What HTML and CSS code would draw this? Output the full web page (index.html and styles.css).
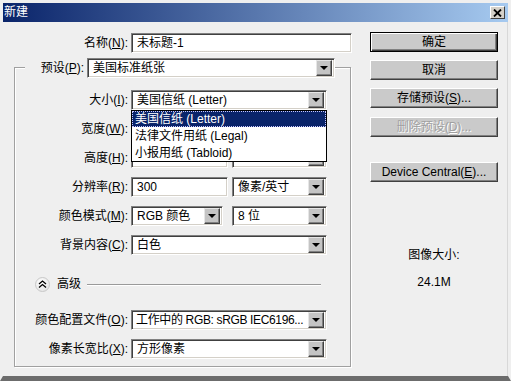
FILE: index.html
```html
<!DOCTYPE html>
<html lang="zh-CN">
<head>
  <meta charset="UTF-8">
  <title>新建</title>
  <link rel="stylesheet" href="styles.css">
</head>
<body>

  <div class="window">
    <div class="titlebar">
      <span class="title">新建</span>
      <span class="close">
        <svg width="9" height="8" viewBox="0 0 9 8"><path d="M1 0.5 L8 7.5 M8 0.5 L1 7.5" stroke="#000" stroke-width="1.8"/></svg>
      </span>
    </div>

    <div class="client">
      <!-- left: fields -->
      <div class="main">
        <div class="row name-row">
          <label class="lbl">名称(<u>N</u>):</label>
          <div class="field w-name">未标题-1</div>
        </div>

        <div class="group">
          <div class="group-head">
            <label class="head-lbl">预设(<u>P</u>):</label>
            <div class="select w-preset"><span class="val">美国标准纸张</span><span class="arrow"></span></div>
          </div>

          <div class="grow first">
            <label class="lbl">大小(<u>I</u>):</label>
            <div class="ctrls">
              <div class="select w-full"><span class="val">美国信纸 (Letter)</span><span class="arrow"></span></div>
            </div>
            <ul class="popup">
              <li class="on">美国信纸 (Letter)</li>
              <li>法律文件用纸 (Legal)</li>
              <li>小报用纸 (Tabloid)</li>
            </ul>
          </div>

          <div class="grow">
            <label class="lbl">宽度(<u>W</u>):</label>
            <div class="ctrls">
              <div class="field w-half"></div>
              <div class="select w-unit"><span class="val"></span><span class="arrow"></span></div>
            </div>
          </div>

          <div class="grow">
            <label class="lbl">高度(<u>H</u>):</label>
            <div class="ctrls">
              <div class="field w-half"></div>
              <div class="select w-unit"><span class="val"></span><span class="arrow"></span></div>
            </div>
          </div>

          <div class="grow">
            <label class="lbl">分辨率(<u>R</u>):</label>
            <div class="ctrls">
              <div class="field w-half">300</div>
              <div class="select w-unit"><span class="val">像素/英寸</span><span class="arrow"></span></div>
            </div>
          </div>

          <div class="grow">
            <label class="lbl">颜色模式(<u>M</u>):</label>
            <div class="ctrls gap-wide">
              <div class="select w-mode"><span class="val">RGB 颜色</span><span class="arrow"></span></div>
              <div class="select w-unit"><span class="val">8 位</span><span class="arrow"></span></div>
            </div>
          </div>

          <div class="grow">
            <label class="lbl">背景内容(<u>C</u>):</label>
            <div class="ctrls">
              <div class="select w-full"><span class="val">白色</span><span class="arrow"></span></div>
            </div>
          </div>

          <div class="advanced">
            <span class="toggle">
              <svg width="9" height="8" viewBox="0 0 9 8"><path d="M1 4 L4.5 1 L8 4 M1 7.5 L4.5 4.5 L8 7.5" fill="none" stroke="#000" stroke-width="1.3"/></svg>
            </span>
            <span class="adv-text">高级</span>
            <span class="adv-line"></span>
          </div>

          <div class="grow after-adv">
            <label class="lbl">颜色配置文件(<u>O</u>):</label>
            <div class="ctrls">
              <div class="select w-full"><span class="val tight">工作中的 RGB: sRGB IEC6196...</span><span class="arrow"></span></div>
            </div>
          </div>

          <div class="grow">
            <label class="lbl">像素长宽比(<u>X</u>):</label>
            <div class="ctrls">
              <div class="select w-full"><span class="val">方形像素</span><span class="arrow"></span></div>
            </div>
          </div>
        </div>
      </div>

      <!-- right: buttons -->
      <div class="side">
        <button class="btn default">确定</button>
        <button class="btn">取消</button>
        <button class="btn">存储预设(<u>S</u>)...</button>
        <button class="btn" disabled>删除预设(<u>D</u>)...</button>
        <button class="btn device">Device Central(<u>E</u>)...</button>

        <div class="size-info">
          <div>图像大小:</div>
          <div class="size-val">24.1M</div>
        </div>
      </div>
    </div>
  </div>

</body>
</html>
```

FILE: styles.css
```css
body {
  margin: 0;
  background-color: #efefef;
  font: 12px/16px "Liberation Sans", "Noto Sans CJK SC", sans-serif;
  color: #000;
}

u {
  text-decoration: underline;
  text-underline-offset: 1px;
}

.window {
  width: 511px;
  height: 381px;
  box-sizing: border-box;
  border: 3px solid #efefef;
  border-bottom: 5px solid #6c6c6c;
  box-shadow: inset -1px 0 #d8d8d8;
  display: flex;
  flex-direction: column;
}

.titlebar {
  height: 19px;
  display: flex;
  align-items: center;
  justify-content: space-between;
  background: linear-gradient(to right, #0a246a, #a6caf0);
  padding: 0 3px 0 1px;
}

.title {
  color: #fff;
  line-height: 19px;
}

.close {
  width: 15px;
  height: 13px;
  display: flex;
  align-items: center;
  justify-content: center;
  background-color: #d4d0c8;
  border: 1px solid;
  border-color: #fff #404040 #404040 #fff;
  box-sizing: border-box;
}

.client {
  display: flex;
  padding-top: 11px;
}

.main {
  width: 367px;
}

/* rows */
.row,
.grow {
  display: grid;
  align-items: center;
  height: 20px;
}

.row {
  grid-template-columns: 128px auto;
}

.grow {
  grid-template-columns: 116px auto;
  margin-top: 9px;
  position: relative;
}

.grow.first {
  margin-top: 12px;
}

.grow.after-adv {
  margin-top: 18px;
}

.lbl {
  text-align: right;
  padding-right: 3px;
  white-space: nowrap;
}

.ctrls {
  display: flex;
  gap: 4px;
}

.ctrls.gap-wide {
  gap: 9px;
}

/* sunken controls */
.field,
.select {
  height: 20px;
  box-sizing: border-box;
  background-color: #fff;
  border: 1px solid;
  border-color: #808080 #fff #fff #808080;
  box-shadow: inset 1px 1px #404040, inset -1px -1px #d4d0c8;
  white-space: nowrap;
  overflow: hidden;
}

.field {
  padding: 1px 5px;
}

.select {
  display: flex;
  align-items: center;
  padding: 1px 2px 1px 1px;
}

.select .val {
  flex: 1;
  padding-left: 4px;
  overflow: hidden;
}

.select .val.tight {
  padding-left: 3px;
  letter-spacing: -0.35px;
}

.arrow {
  width: 16px;
  height: 16px;
  flex: none;
  box-sizing: border-box;
  background-color: #c4c4c4;
  border: 1px solid;
  border-color: #e6e6e6 #404040 #404040 #e6e6e6;
  box-shadow: inset -1px -1px #808080;
  position: relative;
}

.arrow::after {
  content: "";
  position: absolute;
  left: 3px;
  top: 5px;
  border-left: 4px solid transparent;
  border-right: 4px solid transparent;
  border-top: 4px solid #000;
}

.w-name { width: 221px; }
.w-preset { width: 248px; }
.w-full { width: 196px; }
.w-half { width: 97px; }
.w-unit { width: 95px; }
.w-mode { width: 92px; }

/* group box */
.group {
  margin: 14px 0 0 11px;
  width: 335px;
  border: 1px solid #a0a0a0;
  box-shadow: inset 1px 1px #fff, 1px 1px #fff;
  padding-bottom: 7px;
}

.group-head {
  display: flex;
  align-items: center;
  height: 20px;
  margin-top: -10px;
  padding-left: 10px;
}

.head-lbl {
  width: 62px;
  box-sizing: border-box;
  text-align: right;
  padding-right: 3px;
  background-color: #efefef;
  line-height: 20px;
}

/* open dropdown list */
.popup {
  position: absolute;
  left: 116px;
  top: 20px;
  width: 196px;
  box-sizing: border-box;
  margin: 0;
  padding: 0;
  list-style: none;
  background-color: #fff;
  border: 1px solid #000;
  z-index: 2;
}

.popup li {
  height: 16px;
  line-height: 16px;
  padding-left: 3px;
  white-space: nowrap;
}

.popup li + li {
  margin-top: 1px;
}

.popup li.on {
  background-color: #0a246a;
  color: #fff;
  outline: 1px dotted #c8c8ff;
  outline-offset: -1px;
}

/* advanced */
.advanced {
  display: flex;
  align-items: center;
  height: 16px;
  margin-top: 21px;
  padding-left: 20px;
}

.toggle {
  width: 15px;
  height: 15px;
  box-sizing: border-box;
  border-radius: 50%;
  border: 1px solid #c8c8c8;
  background: radial-gradient(circle at 40% 35%, #ffffff, #dedede);
  display: flex;
  align-items: center;
  justify-content: center;
}

.adv-text {
  margin-left: 7px;
}

.adv-line {
  width: 234px;
  height: 1px;
  margin-left: 6px;
  background-color: #9a9a9a;
  box-shadow: 0 1px #fff;
}

/* buttons */
.side {
  width: 128px;
  margin-top: -1px;
  display: flex;
  flex-direction: column;
}

.btn {
  height: 20px;
  margin: 0 0 8px 0;
  padding: 0;
  font: inherit;
  color: #000;
  background-color: #cacaca;
  border: 1px solid;
  border-color: #fff #404040 #404040 #fff;
  box-shadow: inset -1px -1px #808080;
}

.btn.default {
  border: 1px solid #000;
  box-shadow: inset 1px 1px #fff, inset -1px -1px #404040, inset -2px -2px #808080;
}

.btn:disabled {
  color: #a0a0a0;
  text-shadow: 1px 1px #fff;
  margin-top: 1px;
}

.btn.device {
  margin-top: 17px;
}

.size-info {
  margin-top: 57px;
  text-align: center;
  line-height: 16px;
}

.size-val {
  margin-top: 11px;
}
```
